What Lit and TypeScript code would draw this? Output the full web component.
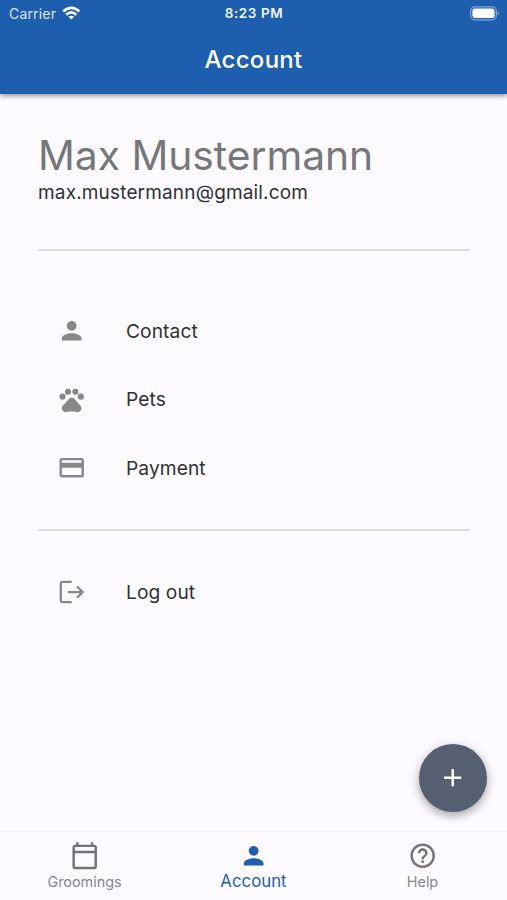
import { LitElement, html, css, svg } from "lit";
import { customElement, property } from "lit/decorators.js";

const icons: Record<string, unknown> = {
  person: svg`<path d="M12 12c2.21 0 4-1.79 4-4s-1.79-4-4-4-4 1.79-4 4 1.79 4 4 4zm0 2c-2.67 0-8 1.34-8 4v2h16v-2c0-2.66-5.33-4-8-4z"/>`,
  pets: svg`<circle cx="4.5" cy="9.5" r="2.5"/><circle cx="9" cy="5.5" r="2.5"/><circle cx="15" cy="5.5" r="2.5"/><circle cx="19.5" cy="9.5" r="2.5"/><path d="M17.34 14.86c-.87-1.02-1.6-1.89-2.48-2.91-.46-.54-1.05-1.08-1.75-1.32-.11-.04-.22-.07-.33-.09-.25-.04-.52-.04-.78-.04s-.53 0-.79.05c-.11.02-.22.05-.33.09-.7.24-1.28.78-1.75 1.32-.87 1.02-1.6 1.89-2.48 2.91-1.31 1.31-2.92 2.76-2.62 4.79.29 1.02 1.02 2.03 2.33 2.32.73.15 3.06-.44 5.54-.44h.18c2.48 0 4.81.58 5.54.44 1.31-.29 2.04-1.31 2.33-2.32.31-2.04-1.3-3.49-2.61-4.8z"/>`,
  card: svg`<path d="M20 4H4c-1.11 0-1.99.89-1.99 2L2 18c0 1.11.89 2 2 2h16c1.11 0 2-.89 2-2V6c0-1.11-.89-2-2-2zm0 14H4v-6h16v6zm0-10H4V6h16v2z"/>`,
  logout: svg`<path d="M12 4H4.6Q3.1 4 3.1 5.5V19Q3.1 20.5 4.6 20.5H12M8.8 12.3H21M16.4 7.7L21 12.3L16.4 16.9" fill="none" stroke="currentColor" stroke-width="1.85"/>`,
  calendar: svg`<path d="M20 3h-1V1h-2v2H7V1H5v2H4c-1.1 0-2 .9-2 2v16c0 1.1.9 2 2 2h16c1.1 0 2-.9 2-2V5c0-1.1-.9-2-2-2zm0 18H4V10h16v11zm0-13H4V5h16v3z"/>`,
  help: svg`<path d="M11 18h2v-2h-2v2zm1-16C6.48 2 2 6.48 2 12s4.48 10 10 10 10-4.48 10-10S17.52 2 12 2zm0 18c-4.41 0-8-3.59-8-8s3.59-8 8-8 8 3.59 8 8-3.59 8-8 8zm0-14c-2.21 0-4 1.79-4 4h2c0-1.1.9-2 2-2s2 .9 2 2c0 2-3 1.75-3 5h2c0-2.25 3-2.5 3-5 0-2.21-1.79-4-4-4z"/>`,
  add: svg`<path d="M19 13h-6v6h-2v-6H5v-2h6V5h2v6h6v2z"/>`,
};

@customElement("app-icon")
class AppIcon extends LitElement {
  @property() name = "";
  static styles = css`
    :host { display: block; width: 29.4px; height: 29.4px; flex: none; }
    svg { display: block; width: 100%; height: 100%; fill: currentColor; }
  `;
  render() {
    return html`<svg viewBox="0 0 24 24">${icons[this.name]}</svg>`;
  }
}

@customElement("app-root")
class AppRoot extends LitElement {
  static styles = css`
    :host {
      display: flex; flex-direction: column; position: relative;
      height: 900px; overflow: hidden; background: #fdfbff; color: #303034;
      font-family: Inter, "Liberation Sans", sans-serif;
    }
    header {
      height: 93.5px; flex: none; background: #1d5eae; color: #fff;
      box-shadow: 0 2px 5px rgba(0, 0, 0, 0.42); z-index: 1;
    }
    .status {
      display: grid; grid-template-columns: 1fr auto 1fr; align-items: center;
      height: 27px; padding: 0 8px 0 9px; font-size: 14px; line-height: 27px;
    }
    .carrier { display: flex; align-items: center; gap: 6px; color: #dce7f5; letter-spacing: 0.17px; }
    .time { font-size: 13.5px; font-weight: 600; letter-spacing: 0.6px; color: #f0f5fc; }
    .wifi { width: 18.5px; height: 14.6px; margin-top: -1px; }
    .battery { justify-self: end; width: 29px; height: 15px; }
    h1 {
      margin: 0; height: 66px; line-height: 66px; text-align: center;
      font-size: 24px; font-weight: 500; letter-spacing: 0.3px;
    }
    main { flex: 1; padding: 38px 37px 0 38px; }
    h2 {
      margin: 0; font-size: 40.8px; line-height: 46px; font-weight: 400;
      letter-spacing: -0.03px; color: #77777a; white-space: nowrap;
    }
    .mail { font-size: 19px; line-height: 30px; letter-spacing: 0.16px; }
    hr { border: 0; height: 2px; margin: 0; background: #dcdbdf; }
    .first { margin-top: 41.5px; }
    .list { padding: 45.5px 0 26.5px; }
    .logout { padding-top: 27px; }
    .row { display: flex; align-items: center; height: 68.5px; padding-left: 19px; font-size: 19.2px; letter-spacing: 0.08px; }
    .row app-icon { margin-right: 39.6px; color: #88888b; }
    nav {
      display: grid; grid-template-columns: repeat(3, 1fr); height: 69.5px; flex: none;
      border-top: 1px solid #f1eff3; box-sizing: border-box; color: #747477;
    }
    .tab { display: flex; flex-direction: column; align-items: center; padding-top: 9.5px; font-size: 14.4px; line-height: 24px; letter-spacing: 0; }
    .tab .label { color: #88888b; }
    .tab.active, .tab.active .label { color: #1d5eae; }
    .tab.active { font-size: 16.8px; line-height: 22px; letter-spacing: 0.02px; }
    .fab {
      position: absolute; right: 20px; bottom: 88px; width: 68.5px; height: 68.5px;
      display: flex; align-items: center; justify-content: center;
      border: 0; border-radius: 50%; padding: 0; background: #565f71; color: #fff;
      box-shadow: 0 4px 8px rgba(0, 0, 0, 0.28), 0 1px 14px rgba(0, 0, 0, 0.1);
    }
  `;

  row(icon: string, label: string) {
    return html`<div class="row"><app-icon name=${icon}></app-icon><span>${label}</span></div>`;
  }

  tab(icon: string, label: string, active = false) {
    return html`<div class="tab ${active ? "active" : ""}">
      <app-icon name=${icon}></app-icon><span class="label">${label}</span>
    </div>`;
  }

  render() {
    return html`
      <header>
        <div class="status">
          <div class="carrier">
            <span>Carrier</span>
            <svg class="wifi" viewBox="0 0 19 15" fill="none" stroke="#fff" stroke-width="2.6">
              <path d="M1.2 5.7Q9.5-1.8 17.8 5.7M4.2 9Q9.5 4.2 14.8 9"/>
              <path d="M9.5 14L6.6 11.1Q9.5 8.7 12.4 11.1Z" fill="#fff" stroke="none"/>
            </svg>
          </div>
          <span class="time">8:23 PM</span>
          <svg class="battery" viewBox="0 0 29 15">
            <rect x="0.7" y="0.8" width="25.6" height="13" rx="4" fill="none" stroke="#82a6d4" stroke-width="1.2"/>
            <rect x="2.4" y="2.5" width="22.2" height="9.6" rx="2.4" fill="#fff"/>
            <path d="M27.4 5.3Q28.8 6 28.8 7.3T27.4 9.3Z" fill="#82a6d4"/>
          </svg>
        </div>
        <h1>Account</h1>
      </header>
      <main>
        <h2>Max Mustermann</h2>
        <div class="mail">max.mustermann@gmail.com</div>
        <hr class="first" />
        <div class="list">
          ${this.row("person", "Contact")}
          ${this.row("pets", "Pets")}
          ${this.row("card", "Payment")}
        </div>
        <hr />
        <div class="logout">${this.row("logout", "Log out")}</div>
      </main>
      <nav>
        ${this.tab("calendar", "Groomings")}
        ${this.tab("person", "Account", true)}
        ${this.tab("help", "Help")}
      </nav>
      <button class="fab" aria-label="Add"><app-icon name="add"></app-icon></button>
    `;
  }
}
